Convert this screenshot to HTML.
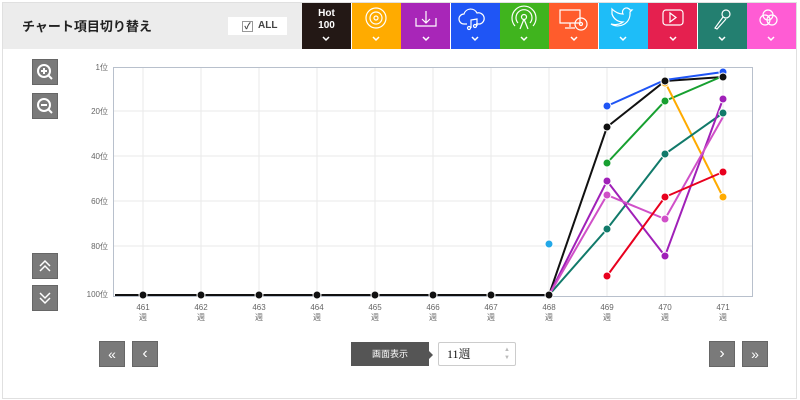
<!DOCTYPE html>
<html><head><meta charset="utf-8"><style>
body{margin:0;width:800px;height:400px;background:#fff;position:relative;overflow:hidden;font-family:"Liberation Sans","Noto Sans CJK JP",sans-serif}
.frame{position:absolute;left:2px;top:2px;width:795px;height:397px;border:1px solid #e0e0e0;box-sizing:border-box}
.hdr{position:absolute;left:3px;top:3px;width:299px;height:46px;background:#ececec}
.ttl{position:absolute;left:22px;top:16px;font-size:13px;font-weight:bold;color:#222}
.all{position:absolute;left:228px;top:17px;width:59px;height:18px;background:#fff;font-size:10px;font-weight:bold;color:#444;line-height:18px}
.all span.cb{position:absolute;left:14px;top:4px;width:9px;height:9px;border:1px solid #999;font-size:9px;line-height:9px;text-align:center}
.tile{position:absolute;top:3px;height:46px;width:49px}
.tile svg{position:absolute;left:0;top:0}
.btn{position:absolute;background:#7a7a7a;border:1px solid #666;box-sizing:border-box;color:#fff;text-align:center}
.yl{position:absolute;font-size:8px;color:#666;text-align:right;width:40px;left:68px}
.xl{position:absolute;font-size:8px;color:#666;text-align:center;width:30px;line-height:10px}
</style></head><body>
<div class="frame"></div>
<div class="hdr"></div>
<div class="ttl">チャート項目切り替え</div>
<div class="all"><span class="cb">✓</span><span style="position:absolute;left:30px">ALL</span></div>
<div class="tile" style="left:302px;background:#231815;color:#fff;font-size:10px;font-weight:bold;text-align:center;line-height:12px;padding-top:5px;box-sizing:border-box">Hot<br>100</div>
<div class="tile" style="left:352px;background:#ffab00"></div>
<div class="tile" style="left:401px;background:#a826b8"></div>
<div class="tile" style="left:451px;background:#1f55f5"></div>
<div class="tile" style="left:500px;background:#40b41e"></div>
<div class="tile" style="left:549px;background:#ff5c2c"></div>
<div class="tile" style="left:599px;background:#1ebdf8"></div>
<div class="tile" style="left:648px;background:#e5204f"></div>
<div class="tile" style="left:698px;background:#237f70"></div>
<div class="tile" style="left:747px;background:#ff5cd4"></div>
<svg width="800" height="60" style="position:absolute;left:0;top:0" fill="none" stroke="#fff" stroke-width="1.2">
<g stroke-width="1.5"><path d="M323 37l3 3 3-3"/><path d="M373 37l3 3 3-3"/><path d="M423 37l3 3 3-3"/><path d="M472 37l3 3 3-3"/><path d="M521 37l3 3 3-3"/><path d="M571 37l3 3 3-3"/><path d="M620 37l3 3 3-3"/><path d="M670 37l3 3 3-3"/><path d="M719 37l3 3 3-3"/><path d="M768 37l3 3 3-3"/></g>
<circle cx="376" cy="18" r="10"/><circle cx="376" cy="18" r="6"/><circle cx="376" cy="18" r="2"/>
<path d="M416 18v8h20v-8M426 11v12M422 19l4 4 4-4"/>
<path d="M467 24h-3a5 5 0 0 1 0-10 7 7 0 0 1 13-1 5 5 0 0 1 3 11h-4M471 28v-8l6-1v7"/><circle cx="469" cy="28" r="1.5"/><circle cx="475" cy="26" r="1.5"/>
<circle cx="524" cy="17" r="2.5"/><path d="M518 23a8 8 0 1 1 12 0M515 26a12 12 0 1 1 18 0M524 19l-4 10M524 19l4 10"/>
<path d="M560 10h20v13h-20zM570 23v4M565 28h10"/><circle cx="581" cy="24" r="6"/><circle cx="581" cy="24" r="1.5"/>
<path d="M612 14c2 6 7 8 11 8-4 3-9 3-12 2 8 5 20 0 19-12l2-2h-2a4 4 0 0 0-7 4c-4 0-8-2-11-5z"/>
<rect x="663" y="10" width="20" height="15" rx="3"/><path d="M670 13v9l6-4.5z"/>
<circle cx="726" cy="14" r="4"/><path d="M723 17l-8 11 2 1 9-10"/>
<circle cx="768" cy="15" r="5"/><circle cx="765" cy="20" r="5"/><circle cx="772" cy="20" r="5"/>
</svg>
<div class="btn" style="left:32px;top:59px;width:26px;height:26px"><svg width="24" height="24"><circle cx="11" cy="11" r="6" stroke="#fff" stroke-width="2" fill="none"/><path d="M15 15l4 4M8 11h6M11 8v6" stroke="#fff" stroke-width="2"/></svg></div>
<div class="btn" style="left:32px;top:93px;width:26px;height:26px"><svg width="24" height="24"><circle cx="11" cy="11" r="6" stroke="#fff" stroke-width="2" fill="none"/><path d="M15 15l4 4M8 11h6" stroke="#fff" stroke-width="2"/></svg></div>
<div class="btn" style="left:32px;top:253px;width:26px;height:26px"><svg width="24" height="24"><path d="M7 12l5-5 5 5M7 17l5-5 5 5" stroke="#fff" stroke-width="1.5" fill="none"/></svg></div>
<div class="btn" style="left:32px;top:285px;width:26px;height:26px"><svg width="24" height="24"><path d="M7 7l5 5 5-5M7 12l5 5 5-5" stroke="#fff" stroke-width="1.5" fill="none"/></svg></div>
<div class="yl" style="top:62px">1位</div><div class="yl" style="top:106px">20位</div><div class="yl" style="top:151px">40位</div><div class="yl" style="top:196px">60位</div><div class="yl" style="top:241px">80位</div><div class="yl" style="top:289px">100位</div>
<svg width="800" height="400" style="position:absolute;left:0;top:0">
<g stroke="#eaeaea" stroke-width="1">
<path d="M143 67v230M201 67v230M259 67v230M317 67v230M375 67v230M433 67v230M491 67v230M549 67v230M607 67v230M665 67v230M723 67v230M113 111h639M113 156h639M113 201h639M113 246h639"/></g>
<rect x="113.5" y="67.5" width="639" height="229" fill="none" stroke="#b8c0cc"/>
<g fill="none" stroke-width="2">
<path d="M115 295H549L607 127L665 81L723 77" stroke="#111"/>
<path d="M607 106L665 80L723 72" stroke="#1f55f5"/>
<path d="M607 163L665 101L723 76" stroke="#17a030"/>
<path d="M665 82L723 197" stroke="#ffab00"/>
<path d="M549 295L607 229L665 154L723 113" stroke="#117a6a"/>
<path d="M549 295L607 181L665 256L723 99" stroke="#a020b8"/>
<path d="M549 295L607 195L665 219L723 117" stroke="#d050c8"/>
<path d="M607 276L665 197L723 172" stroke="#e8001e"/>
</g>
<g stroke="#fff" stroke-width="1">
<g fill="#111"><circle cx="143" cy="295" r="4"/><circle cx="201" cy="295" r="4"/><circle cx="259" cy="295" r="4"/><circle cx="317" cy="295" r="4"/><circle cx="375" cy="295" r="4"/><circle cx="433" cy="295" r="4"/><circle cx="491" cy="295" r="4"/><circle cx="549" cy="295" r="4"/></g>
<circle cx="549" cy="244" r="4" fill="#22a8e8"/>
<g fill="#1f55f5"><circle cx="607" cy="106" r="4"/><circle cx="723" cy="72" r="4"/></g>
<g fill="#ffab00"><circle cx="665" cy="83" r="4"/><circle cx="723" cy="197" r="4"/></g>
<g fill="#111"><circle cx="607" cy="127" r="4"/><circle cx="665" cy="81" r="4"/><circle cx="723" cy="77" r="4"/></g>
<g fill="#17a030"><circle cx="607" cy="163" r="4"/><circle cx="665" cy="101" r="4"/></g>
<g fill="#117a6a"><circle cx="607" cy="229" r="4"/><circle cx="665" cy="154" r="4"/><circle cx="723" cy="113" r="4"/></g>
<g fill="#a020b8"><circle cx="607" cy="181" r="4"/><circle cx="665" cy="256" r="4"/><circle cx="723" cy="99" r="4"/></g>
<g fill="#d050c8"><circle cx="607" cy="195" r="4"/><circle cx="665" cy="219" r="4"/></g>
<g fill="#e8001e"><circle cx="607" cy="276" r="4"/><circle cx="665" cy="197" r="4"/><circle cx="723" cy="172" r="4"/></g>
</g></svg>
<div class="xl" style="left:128px;top:303px">461<br>週</div><div class="xl" style="left:186px;top:303px">462<br>週</div><div class="xl" style="left:244px;top:303px">463<br>週</div><div class="xl" style="left:302px;top:303px">464<br>週</div><div class="xl" style="left:360px;top:303px">465<br>週</div><div class="xl" style="left:418px;top:303px">466<br>週</div><div class="xl" style="left:476px;top:303px">467<br>週</div><div class="xl" style="left:534px;top:303px">468<br>週</div><div class="xl" style="left:592px;top:303px">469<br>週</div><div class="xl" style="left:650px;top:303px">470<br>週</div><div class="xl" style="left:708px;top:303px">471<br>週</div>
<div class="btn" style="left:99px;top:341px;width:26px;height:26px;line-height:24px;font-size:14px">«</div>
<div class="btn" style="left:132px;top:341px;width:26px;height:26px;line-height:24px;font-size:16px">‹</div>
<div class="btn" style="left:709px;top:341px;width:26px;height:26px;line-height:24px;font-size:16px">›</div>
<div class="btn" style="left:742px;top:341px;width:26px;height:26px;line-height:24px;font-size:14px">»</div>
<div style="position:absolute;left:351px;top:342px;width:78px;height:24px;background:#555;color:#fff;font-size:9px;line-height:24px;text-align:center">画面表示</div>
<div style="position:absolute;left:429px;top:351px;border:4px solid transparent;border-left-color:#555;border-right:0"></div>
<div style="position:absolute;left:438px;top:342px;width:78px;height:24px;border:1px solid #ccc;border-radius:2px;box-sizing:border-box;font-size:12px;line-height:22px;padding-left:8px;color:#111;font-family:'Liberation Serif','Noto Serif CJK SC',serif">11週<span style="position:absolute;right:5px;top:0;font-size:6px;line-height:8px;color:#bbb;padding-top:3px">▲<br>▼</span></div>
</body></html>
